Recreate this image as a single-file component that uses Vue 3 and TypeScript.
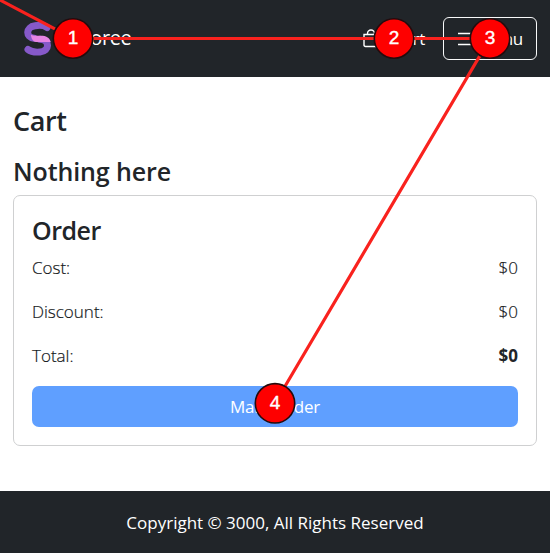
<script setup lang="ts">
interface Row {
  label: string
  value: string
  strong?: boolean
}
interface Marker {
  x: number
  y: number
}

const rows: Row[] = [
  { label: 'Cost:', value: '$0' },
  { label: 'Discount:', value: '$0' },
  { label: 'Total:', value: '$0', strong: true },
]

const markers: Marker[] = [
  { x: 73, y: 38.5 },
  { x: 394, y: 38.5 },
  { x: 490, y: 38.5 },
  { x: 275, y: 403.3 },
]

const route = '-2,-1 ' + markers.map((m) => `${m.x},${m.y}`).join(' ')
</script>

<template>
  <div class="page">
    <header class="navbar">
      <a class="brand">
        <svg class="logo" width="30" height="36" viewBox="0 0 30 36">
          <path d="M25 6.500C22 4.200 17 4 13 4.800C3.500 6 3.500 16.500 12 17.300" fill="none" stroke="#8659c9" stroke-width="7" stroke-linecap="round" />
          <path d="M18 18.300C28 18.800 28 30 18 31C12 31.500 9 31 6 28.500" fill="none" stroke="#8659c9" stroke-width="7" stroke-linecap="round" />
          <path d="M9 13.800Q11 14.800 13 14.800H19C24 14.800 27.500 16.500 28.800 21H14C11 20.500 9 17.500 9 13.800Z" fill="#e684e3" />
        </svg>
        <span class="brand-name">Storee</span>
      </a>
      <nav class="nav">
        <a class="cart-link">
          <svg width="16" height="19" viewBox="0 0 16 19" fill="none" stroke="#fff" stroke-width="1.4">
            <path d="M1 5.500H15V16Q15 17.500 13.500 17.500H2.500Q1 17.500 1 16ZM4.500 5.500V4.500A3.500 3.500 0 0 1 11.500 4.500V5.500" />
          </svg>
          <span>Cart</span>
        </a>
        <button class="menu-button">
          <svg width="14" height="14" viewBox="0 0 14 14" stroke="#fff" stroke-width="1.4">
            <path d="M0 1.500H14M0 7H14M0 12.500H14" />
          </svg>
          <span>Menu</span>
        </button>
      </nav>
    </header>

    <main class="content">
      <h1>Cart</h1>
      <h2 class="empty">Nothing here</h2>
      <section class="card">
        <h2 class="card-title">Order</h2>
        <div v-for="row in rows" :key="row.label" class="row">
          <span>{{ row.label }}</span>
          <span :class="{ strong: row.strong }">{{ row.value }}</span>
        </div>
        <button class="submit">Make order</button>
      </section>
    </main>

    <footer class="footer"><span>Copyright © 3000, All Rights Reserved</span></footer>

    <svg class="overlay" width="550" height="553" viewBox="0 0 550 553">
      <polyline :points="route" fill="none" stroke="#f9221e" stroke-width="3.2" />
      <g v-for="(m, i) in markers" :key="i">
        <circle :cx="m.x" :cy="m.y" r="19.700" fill="#fe0000" stroke="#240b0d" stroke-width="1.600" />
        <text :x="m.x" :y="m.y + 5.500" text-anchor="middle">{{ i + 1 }}</text>
      </g>
    </svg>
  </div>
</template>

<style>
body {
  margin: 0;
  background: #fff;
}
</style>

<style scoped>
.page {
  position: relative;
  display: flex;
  flex-direction: column;
  box-sizing: border-box;
  width: 550px;
  height: 553px;
  overflow: hidden;
  font-family: "Open Sans", "Noto Sans", sans-serif;
  font-size: 17px;
  color: #212529;
}
.navbar {
  display: flex;
  align-items: center;
  justify-content: space-between;
  box-sizing: border-box;
  height: 77px;
  padding: 0 13px 0 22px;
  background: #212529;
  color: #fff;
}
.brand {
  display: flex;
  align-items: center;
  gap: 21px;
}
.logo {
  display: block;
}
.brand-name {
  font-size: 20px;
  line-height: 28px;
  padding-bottom: 2px;
  letter-spacing: -0.4px;
}
.nav {
  display: flex;
  align-items: center;
  gap: 18px;
}
.cart-link {
  display: flex;
  align-items: center;
  gap: 14px;
  letter-spacing: -0.2px;
}
.menu-button {
  display: flex;
  align-items: center;
  justify-content: space-between;
  box-sizing: border-box;
  width: 94px;
  height: 43px;
  padding: 0 13px 0 14px;
  border: 1px solid #f8f9fa;
  border-radius: 6px;
  background: transparent;
  color: #fff;
  font: inherit;
  letter-spacing: -0.3px;
}
.content {
  display: flex;
  flex-direction: column;
  padding: 27px 13px 0;
}
h1,
h2 {
  margin: 0;
  font-weight: 600;
}
h1 {
  font-size: 27px;
  line-height: 34px;
  letter-spacing: -0.4px;
}
.empty {
  margin-top: 18px;
  font-size: 25px;
  line-height: 31px;
  letter-spacing: -0.1px;
}
.card {
  display: flex;
  flex-direction: column;
  box-sizing: border-box;
  height: 251px;
  margin-top: 8px;
  padding: 19px 18px 0;
  border: 1px solid #cfd0d1;
  border-radius: 7px;
}
.card-title {
  font-size: 25px;
  line-height: 31px;
  letter-spacing: -0.5px;
}
.row {
  display: flex;
  justify-content: space-between;
  height: 26px;
  margin: 9px 0;
  line-height: 26px;
  font-weight: 300;
  color: #14181b;
  -webkit-text-stroke: 0.2px currentColor;
}
.row:nth-last-of-type(1) {
  margin-bottom: 17px;
}
.strong {
  font-weight: 700;
  color: #212529;
  -webkit-text-stroke: 0;
}
.submit {
  height: 41px;
  padding: 0;
  border: 0;
  border-radius: 7px;
  background: #5f9fff;
  color: #fff;
  font: inherit;
  letter-spacing: -0.15px;
}
.footer {
  display: flex;
  align-items: center;
  justify-content: center;
  height: 62px;
  margin-top: auto;
  background: #212529;
  color: #fff;
}
.overlay {
  position: absolute;
  inset: 0;
}
.overlay text {
  fill: #fff;
  stroke: #fff;
  stroke-width: 0.4px;
  font-family: "Liberation Sans", sans-serif;
  font-size: 19px;
}
</style>
